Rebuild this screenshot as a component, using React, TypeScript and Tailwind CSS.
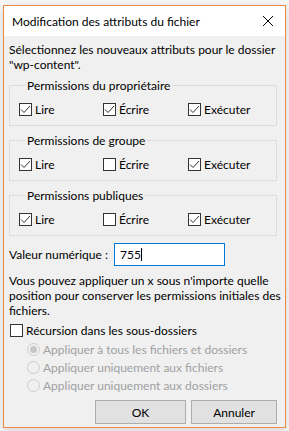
import React from "react";

const font = { fontFamily: 'Lato, "Noto Sans", sans-serif' };

function CheckBox({ checked }: { checked: boolean }) {
  return (
    <span className="flex h-[13px] w-[13px] shrink-0 items-center justify-center border border-[#333333] bg-white">
      {checked && (
        <svg width="11" height="11" viewBox="0 0 11 11" fill="none">
          <path d="M1 5.5 L4 8.5 L10 2" stroke="#333333" strokeWidth="1" />
        </svg>
      )}
    </span>
  );
}

function Radio({ selected }: { selected: boolean }) {
  return (
    <span className="flex h-[13px] w-[13px] shrink-0 items-center justify-center rounded-full border border-[#cccccc] bg-[#f0f0f0]">
      {selected && <span className="h-[7px] w-[7px] rounded-full bg-[#c6c6c6]" />}
    </span>
  );
}

const groups = [
  { title: "Permissions du propriétaire", values: [true, true, true] },
  { title: "Permissions de groupe", values: [true, false, true] },
  { title: "Permissions publiques", values: [true, false, true] },
];

const labels = ["Lire", "Écrire", "Exécuter"];
const widths = ["w-[84px]", "w-[85px]", "w-[85px]"];

const radios = [
  "Appliquer à tous les fichiers et dossiers",
  "Appliquer uniquement aux fichiers",
  "Appliquer uniquement aux dossiers",
];

export default function App() {
  return (
    <div className="h-[431px] w-[289px] bg-[#f7f7f7] pl-[3px] pt-[5px]" style={font}>
      <div className="flex h-[423px] w-[283px] flex-col border border-[#ee8a43] bg-[#f0f0f0] text-[12px] leading-[15px] text-black shadow-[0_2px_8px_rgba(0,0,0,0.15)]">
        {/* Title bar */}
        <div className="flex h-[30px] items-center justify-between bg-white pl-[8px] pr-[8px]">
          <span>Modification des attributs du fichier</span>
          <svg width="12" height="12" viewBox="0 0 12 12" className="mr-[3px]">
            <path d="M1 1 L11 11 M11 1 L1 11" stroke="#000" strokeWidth="1" />
          </svg>
        </div>

        <div className="flex flex-col px-[5px] pt-[6px]">
          <p>
            Sélectionnez les nouveaux attributs pour le dossier
            <br />
            "wp-content".
          </p>

          <div className="mt-[6px] flex flex-col gap-[7px]">
            {groups.map((g) => (
              <fieldset key={g.title} className="mr-[3px] border border-[#dcdcdc] pb-[8px] pl-[9px]">
                <legend className="ml-[6px] px-[2px]">{g.title}</legend>
                <div className="mt-[9px] flex h-[15px] items-center">
                  {g.values.map((v, i) => (
                    <label key={labels[i]} className={`flex items-center gap-[3px] ${widths[i]}`}>
                      <CheckBox checked={v} />
                      <span>{labels[i]}</span>
                    </label>
                  ))}
                </div>
              </fieldset>
            ))}
          </div>

          <div className="mt-[7px] flex items-center">
            <span className="w-[105px] whitespace-nowrap">Valeur numérique :</span>
            <div className="flex h-[23px] w-[111px] items-center border border-[#0078d7] bg-white pl-[5px]">
              <span>755</span>
              <span className="h-[13px] w-px bg-black" />
            </div>
          </div>

          <p className="-mr-[4px] mt-[7px]">
            Vous pouvez appliquer un x sous n'importe quelle position pour conserver les permissions initiales des fichiers.
          </p>

          <label className="mt-[5px] flex h-[15px] items-center gap-[3px] pl-px">
            <CheckBox checked={false} />
            <span>Récursion dans les sous-dossiers</span>
          </label>

          <div className="mt-[4px] flex flex-col gap-[3px] pl-[18px] text-[#a0a0a0]">
            {radios.map((r, i) => (
              <div key={r} className="flex h-[15px] items-center gap-[3px]">
                <Radio selected={i === 0} />
                <span>{r}</span>
              </div>
            ))}
          </div>

          <div className="mt-[7px] flex justify-end gap-[5px] pr-[3px]">
            <button className="h-[24px] w-[91px] border border-[#adadad] bg-[#e1e1e1]">OK</button>
            <button className="h-[24px] w-[86px] border border-[#adadad] bg-[#e1e1e1]">Annuler</button>
          </div>
        </div>
      </div>
    </div>
  );
}
